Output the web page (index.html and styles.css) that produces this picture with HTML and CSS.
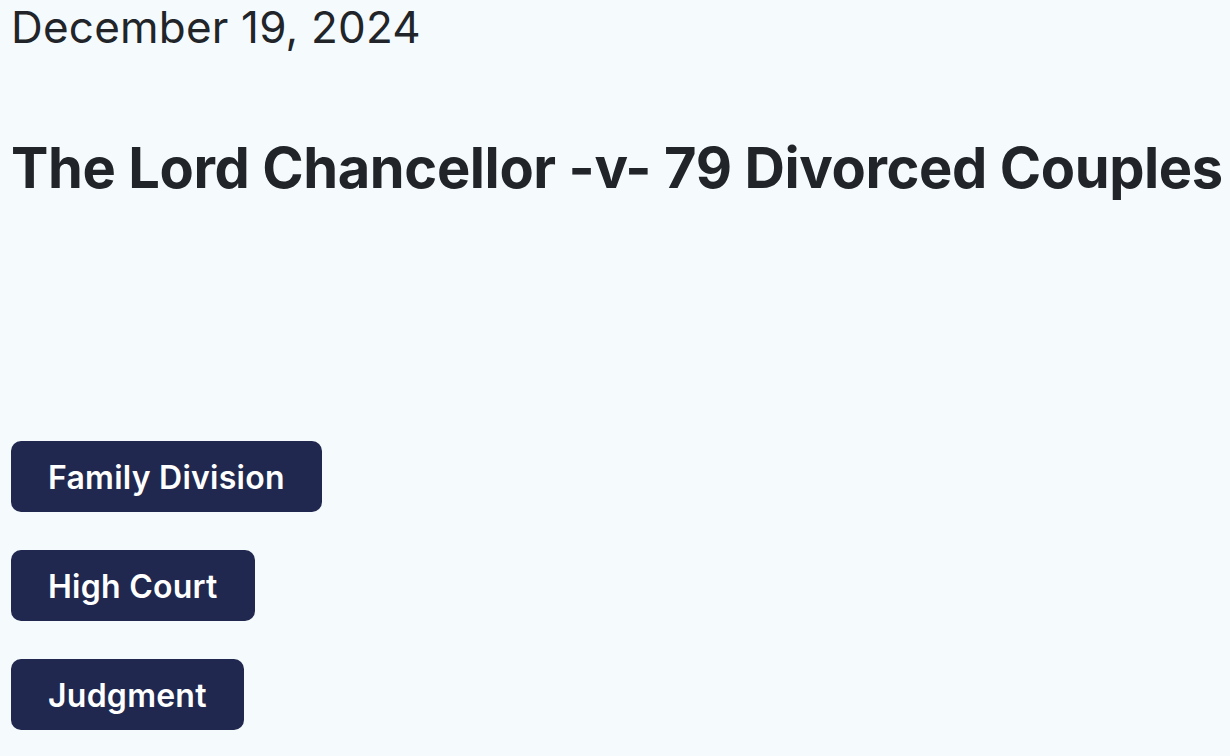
FILE: index.html
```html
<!DOCTYPE html>
<html lang="en">
<head>
  <meta charset="UTF-8" />
  <title>The Lord Chancellor -v- 79 Divorced Couples</title>
  <meta name="viewport" content="width=device-width, initial-scale=1.0" />
  <link rel="stylesheet" href="styles.css">
</head>
<body>
  <div class="post">
    <p class="post-date">December 19, 2024</p>
    <h1 class="post-title">The Lord Chancellor -v- 79 Divorced Couples</h1>
    <div class="post-tags">
      <a href="#" class="tag">Family Division</a>
      <a href="#" class="tag">High Court</a>
      <a href="#" class="tag">Judgment</a>
    </div>
  </div>
</body>
</html>
```

FILE: styles.css
```css
:root {
  --bg-color: #f5fafd;
  --text-color: #212529;
  --tag-bg: #21284f;
}
body {
  margin: 0;
  font-family: "Inter", "Lato", sans-serif;
  background: var(--bg-color);
  color: var(--text-color);
}
.post {
  padding: 0 11px;
}
.post-date {
  margin: 0;
  padding-top: 1px;
  font-size: 44px;
  line-height: 52px;
  font-weight: 400;
  letter-spacing: 0.2px;
}
.post-title {
  margin: 78px 0 0;
  font-size: 56px;
  line-height: 74px;
  font-weight: 700;
  letter-spacing: -0.4px;
  white-space: nowrap;
}
.post-tags {
  display: flex;
  flex-direction: column;
  align-items: flex-start;
  gap: 38px;
  margin-top: 236px;
}
.tag {
  display: block;
  background: var(--tag-bg);
  color: #ffffff;
  text-decoration: none;
  font-size: 32px;
  font-weight: 600;
  letter-spacing: 0.25px;
  line-height: 69px;
  padding: 2px 37px 0;
  height: 71px;
  box-sizing: border-box;
  border-radius: 10px;
}
```
